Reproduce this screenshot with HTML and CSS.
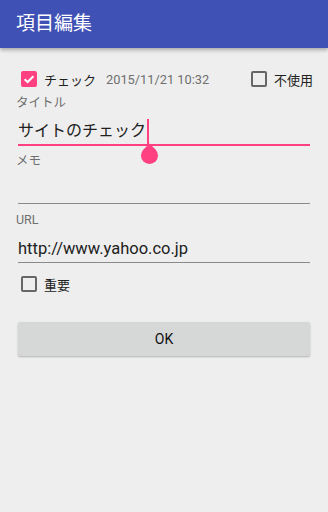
FILE: index.html
```html
<!DOCTYPE html>
<html lang="ja">
<head>
    <meta charset="UTF-8">
    <meta name="viewport" content="width=device-width, initial-scale=1.0">
    <title>項目編集</title>
    <link rel="stylesheet" href="styles.css">
</head>
<body>
    <header class="app-bar">項目編集</header>

    <div class="edit-form">
        <div class="top-row">
            <label class="check">
                <span class="box checked">
                    <svg viewBox="0 0 16 16" width="16" height="16">
                        <path d="M3.6 8.2 L6.6 11 L12.4 5.2" fill="none" stroke="#fff" stroke-width="2"/>
                    </svg>
                </span>
                <span class="check-text">チェック</span>
            </label>
            <span class="date">2015/11/21 10:32</span>
            <label class="check unused">
                <span class="box"></span>
                <span class="check-text">不使用</span>
            </label>
        </div>

        <div class="field-label first">タイトル</div>
        <div class="field focused">
            <span class="value">サイトのチェック</span><span class="caret"></span>
            <span class="handle"></span>
        </div>

        <div class="field-label">メモ</div>
        <div class="field memo"></div>

        <div class="field-label url-label">URL</div>
        <div class="field url">
            <span class="value">http://www.yahoo.co.jp</span>
        </div>

        <label class="check important">
            <span class="box"></span>
            <span class="check-text">重要</span>
        </label>

        <button type="button" class="ok-button">OK</button>
    </div>
</body>
</html>
```

FILE: styles.css
```css
:root {
    --primary: #3f51b5;
    --accent: #ff4081;
    --background: #eeeeee;
    --text-dark: #212121;
    --text-gray: #6f6f6f;
    --line-gray: #8a8a8a;
}

body {
    margin: 0;
    width: 328px;
    height: 512px;
    background-color: var(--background);
    font-family: Roboto, "Noto Sans CJK JP", sans-serif;
    overflow: hidden;
}

.app-bar {
    height: 48px;
    line-height: 48px;
    padding-left: 16px;
    background-color: var(--primary);
    color: #ffffff;
    font-size: 19px;
    font-weight: 400;
    box-shadow: 0 2px 4px rgba(0, 0, 0, 0.3);
    position: relative;
}

.edit-form {
    padding: 0 18px 0 16px;
    display: flex;
    flex-direction: column;
}

.top-row {
    margin-top: 19px;
    height: 24px;
    display: flex;
    align-items: center;
}

.check {
    display: flex;
    align-items: center;
    height: 24px;
}

.box {
    width: 16px;
    height: 16px;
    box-sizing: border-box;
    border: 2px solid #666666;
    border-radius: 2px;
    margin-left: 5px;
    margin-right: 7px;
}

.box.checked {
    border: none;
    background-color: var(--accent);
}

.box svg {
    display: block;
}

.check-text {
    font-size: 13px;
    color: var(--text-dark);
}

.date {
    margin-left: 10px;
    font-size: 12.8px;
    color: var(--text-gray);
}

.unused {
    margin-left: auto;
    margin-right: -3px;
}

.unused .box {
    margin-left: 0;
}

.field-label {
    margin-top: 7px;
    height: 16px;
    line-height: 16px;
    font-size: 12.5px;
    color: var(--text-gray);
}

.field-label.first {
    margin-top: 4px;
}

.field-label.url-label {
    margin-top: 8px;
}

.field {
    margin-left: 2px;
    height: 24px;
    line-height: 24px;
    padding: 9px 0 1px;
    border-bottom: 1px solid var(--line-gray);
    font-size: 16.5px;
    color: var(--text-dark);
    position: relative;
    display: flex;
    align-items: center;
}

.field.focused {
    padding-top: 8px;
    font-size: 16px;
    border-bottom: 2px solid var(--accent);
}

.caret {
    width: 2px;
    height: 25px;
    margin-left: 1px;
    align-self: flex-end;
    margin-bottom: -1px;
    background-color: var(--accent);
}

.handle {
    position: absolute;
    left: 123px;
    top: 36px;
    width: 17px;
    height: 17px;
    background-color: var(--accent);
    border-radius: 0 50% 50% 50%;
    transform: rotate(45deg);
}

.important {
    margin-top: 9px;
}

.ok-button {
    margin-top: 26px;
    margin-left: 2px;
    height: 34px;
    border: none;
    border-radius: 2px;
    background-color: #d6d7d7;
    box-shadow: 0 1px 2px rgba(0, 0, 0, 0.25);
    font-family: Roboto, sans-serif;
    font-size: 14px;
    font-weight: 400;
    color: #111111;
}
```
